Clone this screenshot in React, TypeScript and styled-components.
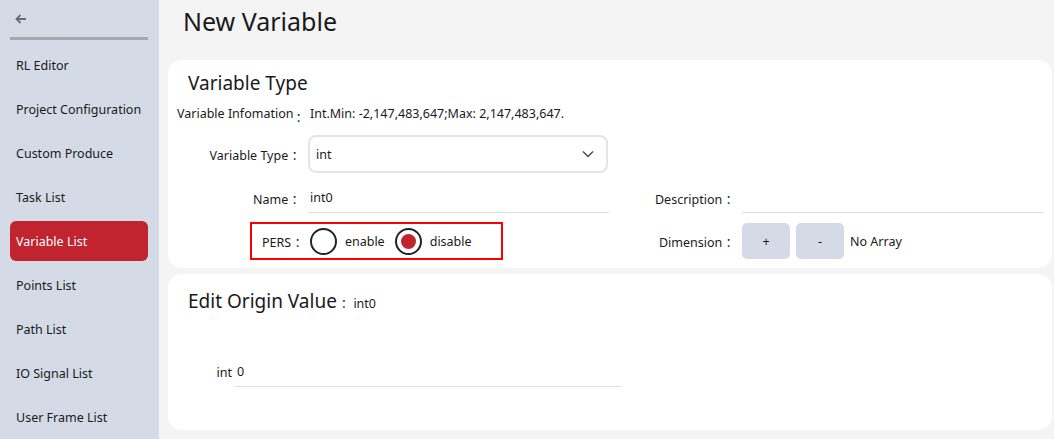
import { createGlobalStyle } from "styled-components";
import styled from "styled-components";

const GlobalStyle = createGlobalStyle`
    html, body {
        margin: 0;
        padding: 0;
        background: #f4f4f4;
    }
    body {
        font-family: "Noto Sans", "Noto Sans CJK SC", sans-serif;
        color: #1a1a1a;
    }
`;

const Layout = styled.div`
    display: flex;
    width: 1054px;
    height: 439px;
    overflow: hidden;
`;

const Sidebar = styled.nav`
    width: 159px;
    flex-shrink: 0;
    background: #d4dbe6;
    display: flex;
    flex-direction: column;
    padding: 0 11px 0 10px;
    box-sizing: border-box;
`;

const BackRow = styled.div`
    height: 37px;
    display: flex;
    align-items: center;
    padding-left: 5px;
`;

const Separator = styled.div`
    height: 3px;
    background: #a7a7a7;
    margin-bottom: 5px;
`;

const MenuList = styled.ul`
    list-style: none;
    margin: 0;
    padding: 0;
    display: flex;
    flex-direction: column;
    gap: 4px;
`;

const MenuItem = styled.li<{ $active?: boolean }>`
    height: 40px;
    display: flex;
    align-items: center;
    padding-left: 6px;
    font-size: 12.5px;
    border-radius: 6px;
    white-space: nowrap;
    color: ${(p) => (p.$active ? "#fff" : "#1a1a1a")};
    background: ${(p) => (p.$active ? "#c1232f" : "transparent")};
`;

const Main = styled.main`
    flex: 1;
    display: flex;
    flex-direction: column;
    padding: 0 2px 0 9px;
    gap: 6px;
`;

const PageTitle = styled.h1`
    margin: 0 0 12px;
    height: 42px;
    display: flex;
    align-items: center;
    padding-left: 15px;
    font-size: 25px;
    font-weight: 400;
`;

const Card = styled.section<{ $height: number }>`
    background: #fff;
    border-radius: 14px;
    height: ${(p) => p.$height}px;
    box-sizing: border-box;
    display: flex;
    flex-direction: column;
`;

const CardTitle = styled.h2`
    margin: 0;
    font-size: 19px;
    font-weight: 400;
    display: flex;
    align-items: baseline;
    gap: 4px;
`;

const TitleNote = styled.span`
    font-size: 12.5px;
`;

const InfoRow = styled.div`
    display: flex;
    align-items: center;
    font-size: 12.5px;
    padding-left: 9px;
    margin-top: 5px;
    gap: 2px;
`;

const FormGrid = styled.div`
    display: grid;
    grid-template-columns: 440px 1fr;
`;

const Field = styled.div<{ $labelWidth: number }>`
    display: grid;
    grid-template-columns: ${(p) => p.$labelWidth}px 1fr;
    align-items: center;
    font-size: 12.5px;
`;

const Label = styled.label`
    text-align: right;
    white-space: nowrap;
    padding-right: 4px;
`;

const SelectBox = styled.div`
    width: 300px;
    height: 38px;
    box-sizing: border-box;
    border: 2px solid #e4e4e4;
    border-radius: 8px;
    display: flex;
    align-items: center;
    justify-content: space-between;
    padding: 0 12px 0 6px;
    font-size: 12.5px;
`;

const LineInput = styled.div<{ $width: number }>`
    width: ${(p) => p.$width}px;
    height: 30px;
    box-sizing: border-box;
    border-bottom: 1px solid #dedede;
    display: flex;
    align-items: center;
    padding-left: 2px;
    padding-bottom: 1px;
    font-size: 12.5px;
`;

const PersBox = styled.div`
    margin-left: 82px;
    width: 253px;
    height: 38px;
    box-sizing: border-box;
    border: 2px solid #f00;
    display: flex;
    align-items: center;
    padding-left: 10px;
    font-size: 12.5px;
`;

const RadioGroup = styled.div`
    display: flex;
    align-items: center;
    gap: 10px;
    margin-left: 3px;
`;

const RadioOption = styled.label`
    display: flex;
    align-items: center;
    gap: 8px;
`;

const RadioCircle = styled.span<{ $checked?: boolean }>`
    width: 27px;
    height: 27px;
    box-sizing: border-box;
    border: 2px solid #222;
    border-radius: 50%;
    display: flex;
    align-items: center;
    justify-content: center;

    &::after {
        content: "";
        width: 15px;
        height: 15px;
        border-radius: 50%;
        background: ${(p) => (p.$checked ? "#c1232f" : "transparent")};
    }
`;

const DimButtons = styled.div`
    display: flex;
    align-items: center;
    gap: 6px;
`;

const DimButton = styled.button`
    width: 48px;
    height: 36px;
    border: none;
    border-radius: 5px;
    background: #d4dbe6;
    font-family: inherit;
    font-size: 12.5px;
    color: #1a1a1a;
    padding: 0;
`;

const Colon = () => <>：</>;

const Chevron = () => (
    <svg width="12" height="8" viewBox="0 0 12 8" fill="none">
        <path d="M1 1.5 L6 6.5 L11 1.5" stroke="#444" strokeWidth="1.3" />
    </svg>
);

const BackArrow = () => (
    <svg width="12" height="10" viewBox="0 0 12 10" fill="none">
        <path d="M5.5 1 L1.5 5 L5.5 9 M1.5 5 H11" stroke="#6b6b6b" strokeWidth="1.8" />
    </svg>
);

const menu = [
    "RL Editor",
    "Project Configuration",
    "Custom Produce",
    "Task List",
    "Variable List",
    "Points List",
    "Path List",
    "IO Signal List",
    "User Frame List",
];

export default function App() {
    return (
        <>
            <GlobalStyle />
            <Layout>
                <Sidebar>
                    <BackRow>
                        <BackArrow />
                    </BackRow>
                    <Separator />
                    <MenuList>
                        {menu.map((m) => (
                            <MenuItem key={m} $active={m === "Variable List"}>{m}</MenuItem>
                        ))}
                    </MenuList>
                </Sidebar>

                <Main>
                    <PageTitle>New Variable</PageTitle>

                    <Card $height={208} style={{ padding: "10px 8px 0 0" }}>
                        <CardTitle style={{ paddingLeft: 20 }}>Variable Type</CardTitle>
                        <InfoRow>
                            <span>Variable Infomation</span>
                            <span style={{ marginTop: 6 }}><Colon /></span>
                            <span>Int.Min: -2,147,483,647;Max: 2,147,483,647.</span>
                        </InfoRow>

                        <Field $labelWidth={140} style={{ marginTop: 9 }}>
                            <Label>Variable Type <Colon /></Label>
                            <SelectBox>
                                <span>int</span>
                                <Chevron />
                            </SelectBox>
                        </Field>

                        <FormGrid style={{ marginTop: 10 }}>
                            <Field $labelWidth={140}>
                                <Label>Name <Colon /></Label>
                                <LineInput $width={301}>int0</LineInput>
                            </Field>
                            <Field $labelWidth={134}>
                                <Label>Description <Colon /></Label>
                                <LineInput $width={302} />
                            </Field>

                            <div style={{ marginTop: 9 }}>
                                <PersBox>
                                    <span>PERS <Colon /></span>
                                    <RadioGroup>
                                        <RadioOption>
                                            <RadioCircle />
                                            enable
                                        </RadioOption>
                                        <RadioOption>
                                            <RadioCircle $checked />
                                            disable
                                        </RadioOption>
                                    </RadioGroup>
                                </PersBox>
                            </div>
                            <Field $labelWidth={134} style={{ marginTop: 9 }}>
                                <Label>Dimension <Colon /></Label>
                                <DimButtons>
                                    <DimButton>+</DimButton>
                                    <DimButton>-</DimButton>
                                    <span>No Array</span>
                                </DimButtons>
                            </Field>
                        </FormGrid>
                    </Card>

                    <Card $height={156} style={{ padding: "14px 0 0 20px" }}>
                        <CardTitle>
                            Edit Origin Value <TitleNote><Colon />int0</TitleNote>
                        </CardTitle>
                        <Field $labelWidth={47} style={{ marginTop: 43 }}>
                            <Label style={{ paddingRight: 3 }}>int</Label>
                            <LineInput $width={386}>0</LineInput>
                        </Field>
                    </Card>
                </Main>
            </Layout>
        </>
    );
}
